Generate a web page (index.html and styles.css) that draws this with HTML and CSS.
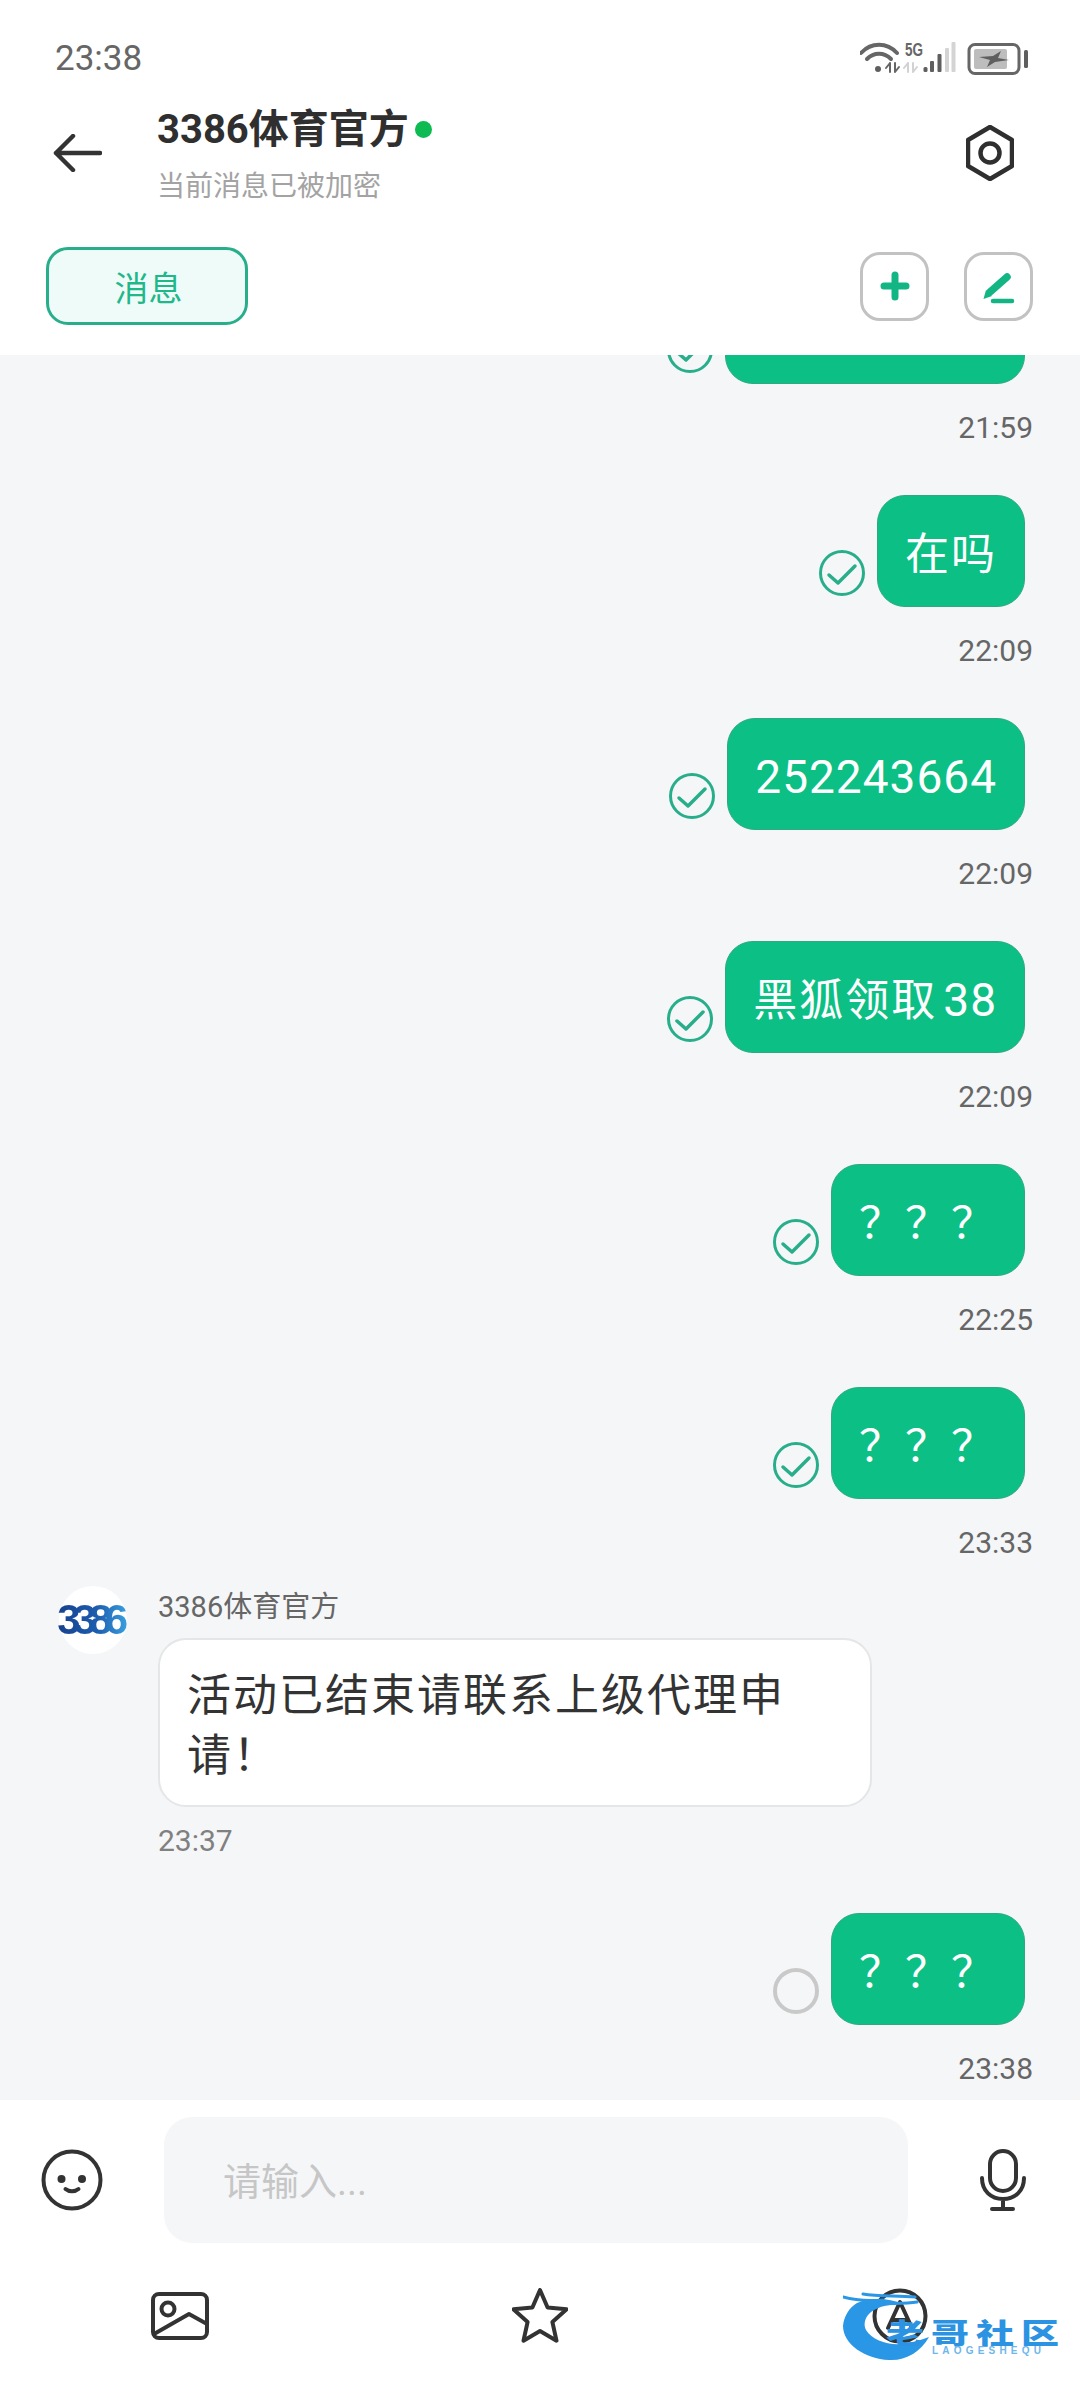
FILE: index.html
```html
<!DOCTYPE html>
<html lang="zh-CN">
<head>
<meta charset="utf-8">
<title>3386体育官方</title>
<link rel="stylesheet" href="styles.css">
</head>
<body>
<div class="app">
  <header class="top">
    <div class="status">
      <span class="clock">23:38</span>
      <svg class="status-icons" width="170" height="34" viewBox="860 42 170 34">
        <g class="st-line">
          <path d="M861 54C871 43 887 43 897 54"/>
          <path d="M867 60C874 53 884 53 891 60"/>
        </g>
        <circle class="st-fill" cx="878" cy="70" r="3"/>
        <path class="st-small" d="M890 64V73M886 69l4-5M895 64V73M895 73l4-5"/>
        <text class="st-5g" x="905" y="57" textLength="18" lengthAdjust="spacingAndGlyphs">5G</text>
        <path class="st-small-light" d="M908 64V73M904 69l4-5M913 64V73M913 73l4-5"/>
        <rect class="st-fill" x="923.500" y="68" width="4" height="5" rx="1.500"/>
        <rect class="st-fill" x="930" y="62" width="4" height="11" rx="1"/>
        <rect class="st-fill" x="937.500" y="55" width="4" height="18" rx="1"/>
        <rect class="st-pale" x="945" y="49" width="4" height="24" rx="1"/>
        <rect class="st-pale" x="951.500" y="43" width="4" height="30" rx="1"/>
        <rect class="bat-body" x="969" y="45.500" width="50" height="29" rx="6"/>
        <rect class="bat-level" x="974" y="50" width="33" height="20" rx="2"/>
        <path class="st-fill" d="M979 58L993 57L1001 52L998 59L1009 61L995 63L987 68L990 61Z"/>
        <rect class="st-fill" x="1024" y="51" width="4" height="18" rx="1.500"/>
      </svg>
    </div>
    <div class="title-row">
      <svg class="back" width="49" height="38" viewBox="0 0 49 38">
        <path d="M47 19H3M20 2L3 19L20 36"/>
      </svg>
      <div class="title-block">
        <div class="title-line"><span class="title">3386体育官方</span><span class="online"></span></div>
        <div class="subtitle">当前消息已被加密</div>
      </div>
      <svg class="settings" width="48" height="56" viewBox="0 0 48 56">
        <path d="M24 2L46 15V41L24 54L2 41V15Z"/>
        <circle cx="24" cy="28" r="9.500"/>
      </svg>
    </div>
    <div class="tab-row">
      <div class="tab">消息</div>
      <div class="tools">
        <div class="tool">
          <svg class="tool-plus" width="30" height="30" viewBox="0 0 30 30"><path d="M15 4V26M4 15H26"/></svg>
        </div>
        <div class="tool">
          <svg width="36" height="36" viewBox="0 0 36 36">
            <path class="pen" d="M26 9L9 24"/>
            <path class="pen-tip" d="M5 22L11 28L2.500 31Z"/>
            <path class="pen-line" d="M12 33H31"/>
          </svg>
        </div>
      </div>
    </div>
  </header>

  <main class="chat">
    <div class="msg out">
      <div class="row">
        <svg class="sent" width="46" height="46" viewBox="0 0 46 46"><circle cx="23" cy="23" r="21.500"/><path d="M10 25L19 33L36 16"/></svg>
        <div class="bubble bubble-cut"></div>
      </div>
      <time class="time">21:59</time>
    </div>
    <div class="msg out">
      <div class="row">
        <svg class="sent" width="46" height="46" viewBox="0 0 46 46"><circle cx="23" cy="23" r="21.500"/><path d="M10 25L19 33L36 16"/></svg>
        <div class="bubble">在吗</div>
      </div>
      <time class="time">22:09</time>
    </div>
    <div class="msg out">
      <div class="row">
        <svg class="sent" width="46" height="46" viewBox="0 0 46 46"><circle cx="23" cy="23" r="21.500"/><path d="M10 25L19 33L36 16"/></svg>
        <div class="bubble"><span class="num">252243664</span></div>
      </div>
      <time class="time">22:09</time>
    </div>
    <div class="msg out">
      <div class="row">
        <svg class="sent" width="46" height="46" viewBox="0 0 46 46"><circle cx="23" cy="23" r="21.500"/><path d="M10 25L19 33L36 16"/></svg>
        <div class="bubble">黑狐领取<span class="num num-gap">38</span></div>
      </div>
      <time class="time">22:09</time>
    </div>
    <div class="msg out">
      <div class="row">
        <svg class="sent" width="46" height="46" viewBox="0 0 46 46"><circle cx="23" cy="23" r="21.500"/><path d="M10 25L19 33L36 16"/></svg>
        <div class="bubble">？？？</div>
      </div>
      <time class="time">22:25</time>
    </div>
    <div class="msg out">
      <div class="row">
        <svg class="sent" width="46" height="46" viewBox="0 0 46 46"><circle cx="23" cy="23" r="21.500"/><path d="M10 25L19 33L36 16"/></svg>
        <div class="bubble">？？？</div>
      </div>
      <time class="time">23:33</time>
    </div>
    <div class="msg in">
      <div class="avatar"><span class="avatar-logo">3386</span></div>
      <div class="in-body">
        <div class="sender">3386体育官方</div>
        <div class="bubble bubble-in">活动已结束请联系上级代理申请！</div>
        <time class="time time-in">23:37</time>
      </div>
    </div>
    <div class="msg out">
      <div class="row">
        <svg class="pending" width="46" height="46" viewBox="0 0 46 46"><circle cx="23" cy="23" r="21"/></svg>
        <div class="bubble">？？？</div>
      </div>
      <time class="time">23:38</time>
    </div>
  </main>

  <footer class="bottom">
    <div class="input-row">
      <svg class="smile icon" width="62" height="62" viewBox="0 0 62 62">
        <circle cx="31" cy="31" r="28.500"/>
        <circle class="icon-dot" cx="20.500" cy="30" r="4"/>
        <circle class="icon-dot" cx="41" cy="30" r="4"/>
        <path d="M24.500 40C28 43 34 43 37.500 40"/>
      </svg>
      <div class="input">请输入...</div>
      <svg class="mic icon" width="46" height="62" viewBox="0 0 46 62">
        <rect x="10" y="2" width="26" height="40" rx="13"/>
        <path d="M2 29C2 42 11 50 23 50C35 50 44 42 44 29M23 50V60M12 60H33"/>
      </svg>
    </div>
    <div class="tool-row">
      <svg class="icon" width="58" height="48" viewBox="0 0 58 48">
        <rect x="2" y="2" width="54" height="44" rx="6"/>
        <circle cx="17" cy="17" r="6.500"/>
        <path d="M3 42L38 22L56 32"/>
      </svg>
      <svg class="icon" width="56" height="56" viewBox="0 0 56 56">
        <path d="M28 2L35.600 19.500L54.600 21.350L40.400 34L44.500 52.650L28 43L11.500 52.650L15.600 34L1.400 21.350L20.400 19.500Z"/>
      </svg>
      <svg class="icon" width="56" height="56" viewBox="0 0 56 56">
        <circle cx="28" cy="28" r="25.500"/>
        <path d="M16 40L28 14L40 40M20 32H36"/>
      </svg>
    </div>
    <svg class="watermark" width="237" height="74" viewBox="0 0 237 74">
      <path class="wm-line" d="M0 5C14 9 28 9 40 8M20 2C36 5 56 3 72 5M34 12C48 11 62 12 74 10"/>
      <path class="wm-shape" d="M14 11C26 6 44 5 60 12C48 12 36 14 28 20C22 25 20 32 23 38C29 48 44 53 58 52C68 51 78 48 86 45C78 60 62 69 46 68C22 67 0 52 0 34C1 24 6 16 14 11Z"/>
      <text class="wm-title" transform="translate(43 52) scale(1 .75)">老哥社区</text>
      <text class="wm-sub" x="89" y="62">LAOGESHEQU</text>
    </svg>
  </footer>
</div>
</body>
</html>
```

FILE: styles.css
```css
* {
  box-sizing: border-box;
}

html,
body {
  margin: 0;
  padding: 0;
  background: #fff;
}

body {
  font-family: Roboto, "Noto Sans CJK SC", sans-serif;
  color: #333;
}

.app {
  position: relative;
  width: 1080px;
  height: 2388px;
  display: flex;
  flex-direction: column;
  overflow: hidden;
}

/* header */
.top {
  height: 355px;
  flex: none;
  background: #fff;
}

.status {
  height: 90px;
  padding: 39px 50px 0 55px;
  display: flex;
  justify-content: space-between;
  align-items: flex-start;
}

.clock {
  font-size: 35px;
  line-height: 40px;
  color: #666;
}

.status-icons {
  display: block;
  margin-top: 2px;
}

.st-line,
.st-small,
.st-small-light {
  fill: none;
  stroke-linecap: round;
  stroke: #666;
}

.st-line {
  stroke-width: 4px;
}

.st-small {
  stroke-width: 2px;
}

.st-small-light {
  stroke: #d2d2d2;
  stroke-width: 2px;
}

.st-fill {
  fill: #5f5f5f;
}

.st-pale {
  fill: #d4d4d4;
}

.st-5g {
  font-family: "Liberation Sans", sans-serif;
  font-size: 18px;
  font-weight: 700;
  fill: #666;
}

.bat-body {
  fill: none;
  stroke: #666;
  stroke-width: 3px;
}

.bat-level {
  fill: #bdbdbd;
}

.title-row {
  height: 126px;
  padding: 0 66px 0 53px;
  display: flex;
  align-items: center;
}

.back {
  flex: none;
  margin-right: 55px;
}

.back path {
  fill: none;
  stroke: #333;
  stroke-width: 4.500px;
  stroke-linecap: round;
  stroke-linejoin: round;
}

.title-block {
  flex: 1;
  padding-top: 3px;
}

.title-line {
  display: flex;
  align-items: center;
  height: 52px;
  margin-bottom: 13px;
}

.title {
  font-size: 40px;
  font-weight: 700;
  line-height: 52px;
  color: #2f2f2f;
}

.online {
  width: 17px;
  height: 17px;
  margin: 0 0 2px 6px;
  border-radius: 50%;
  background: #0dbb52;
}

.subtitle {
  font-size: 28px;
  line-height: 36px;
  color: #a3a3a3;
}

.settings {
  flex: none;
}

.settings path,
.settings circle {
  fill: none;
  stroke: #2f2f2f;
  stroke-width: 4.500px;
  stroke-linejoin: round;
}

.tab-row {
  padding: 31px 47px 30px 46px;
  display: flex;
  justify-content: space-between;
  align-items: center;
}

.tab {
  width: 202px;
  height: 78px;
  padding-left: 3px;
  display: flex;
  align-items: center;
  justify-content: center;
  border: 3px solid #28ae8b;
  border-radius: 22px;
  background: #effbf8;
  color: #1fb88b;
  font-size: 34px;
}

.tools {
  display: flex;
  gap: 35px;
}

.tool {
  width: 69px;
  height: 69px;
  display: flex;
  align-items: center;
  justify-content: center;
  border: 3px solid #c2c2c2;
  border-radius: 20px;
}

.tool-plus path {
  fill: none;
  stroke: #14b585;
  stroke-width: 7px;
  stroke-linecap: round;
}

.pen {
  fill: none;
  stroke: #14b585;
  stroke-width: 7.500px;
  stroke-linecap: round;
}

.pen-tip {
  fill: #14b585;
}

.pen-line {
  fill: none;
  stroke: #14b585;
  stroke-width: 4.500px;
  stroke-linecap: round;
}

/* chat */
.chat {
  flex: 1;
  min-height: 0;
  background: #f5f6f8;
  display: flex;
  flex-direction: column;
  justify-content: flex-end;
  gap: 47px;
  padding: 0 47px 11px 59px;
  overflow: hidden;
}

.msg {
  flex: none;
}

.out {
  display: flex;
  flex-direction: column;
  align-items: flex-end;
}

.row {
  display: flex;
  align-items: flex-end;
  gap: 12px;
  padding-right: 8px;
}

.sent,
.pending {
  flex: none;
  margin-bottom: 11px;
}

.sent circle,
.sent path {
  fill: none;
  stroke: #28ae8b;
  stroke-width: 3px;
  stroke-linecap: round;
  stroke-linejoin: round;
}

.sent path {
  stroke-width: 3.500px;
}

.pending circle {
  fill: none;
  stroke: #c9c9c9;
  stroke-width: 4px;
}

.bubble {
  padding: 25px 27px;
  height: 112px;
  border: 1px solid #2ea981;
  border-radius: 28px;
  background: #0cbf85;
  color: #fff;
  font-family: "Noto Sans CJK SC", sans-serif;
  font-size: 44px;
  line-height: 60px;
  letter-spacing: 2px;
}

.bubble-cut {
  width: 300px;
}

.num {
  font-family: Roboto, sans-serif;
  font-size: 46px;
  line-height: 1;
  letter-spacing: 1px;
}

.num-gap {
  margin-left: 6px;
}

.time {
  display: block;
  margin-top: 24px;
  font-size: 30px;
  line-height: 40px;
  color: #666;
}

.in {
  display: flex;
  margin: -24px 0 5px;
}

.avatar {
  flex: none;
  width: 68px;
  height: 68px;
  margin-right: 31px;
  border-radius: 50%;
  background: #fff;
  display: flex;
  align-items: center;
  justify-content: center;
}

.avatar-logo {
  padding-right: 8px;
  font-family: "Liberation Sans", sans-serif;
  font-size: 42px;
  font-weight: 700;
  letter-spacing: -7.500px;
  background: linear-gradient(90deg, #16418e 0%, #1d5cae 55%, #3aa3e2 100%);
  -webkit-background-clip: text;
  background-clip: text;
  color: transparent;
}

.in-body {
  width: 714px;
}

.sender {
  height: 42px;
  margin-bottom: 10px;
  font-size: 29px;
  line-height: 42px;
  color: #666;
}

.bubble-in {
  height: 169px;
  padding: 22px 27px 23px;
  border: 2px solid #e5e6e8;
  background: #fff;
  color: #333;
}

.time-in {
  margin-top: 14px;
  color: #808080;
}

/* footer */
.bottom {
  flex: none;
  height: 288px;
  background: #fff;
}

.input-row {
  padding-top: 17px;
  display: grid;
  grid-template-columns: 164px 744px 172px;
  align-items: center;
}

.smile {
  margin-left: 41px;
}

.mic {
  margin-left: 72px;
}

.input {
  height: 126px;
  padding: 0 0 3px 59px;
  display: flex;
  align-items: center;
  border-radius: 28px;
  background: #f5f6f8;
  font-size: 38px;
  color: #c6c6c6;
}

.icon {
  display: block;
}

.icon path,
.icon rect,
.icon circle {
  fill: none;
  stroke: #333;
  stroke-width: 4px;
  stroke-linecap: round;
  stroke-linejoin: round;
}

.icon .icon-dot {
  fill: #333;
  stroke: none;
}

.tool-row {
  padding-top: 45px;
  display: grid;
  grid-template-columns: repeat(3, 1fr);
  justify-items: center;
  align-items: center;
}

.watermark {
  position: absolute;
  left: 843px;
  top: 2292px;
}

.wm-shape {
  fill: #2a96e6;
}

.wm-line {
  fill: none;
  stroke: #2a96e6;
  stroke-width: 3px;
  stroke-linecap: round;
}

.wm-title {
  font-family: "Noto Sans CJK SC", sans-serif;
  font-size: 38px;
  font-weight: 900;
  letter-spacing: 7px;
  fill: #2b93e2;
}

.wm-sub {
  font-family: "Liberation Sans", sans-serif;
  font-size: 10px;
  font-weight: 700;
  letter-spacing: 4.200px;
  fill: #6fb6ea;
}
```
